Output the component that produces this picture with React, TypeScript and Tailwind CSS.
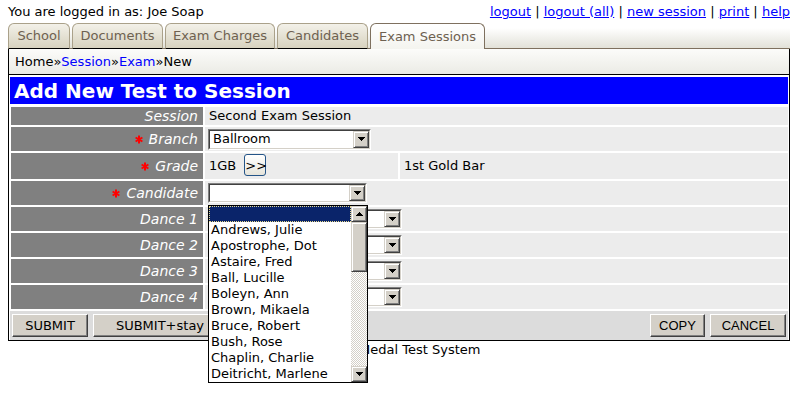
import React from "react";

const candidates = [
  "",
  "Andrews, Julie",
  "Apostrophe, Dot",
  "Astaire, Fred",
  "Ball, Lucille",
  "Boleyn, Ann",
  "Brown, Mikaela",
  "Bruce, Robert",
  "Bush, Rose",
  "Chaplin, Charlie",
  "Deitricht, Marlene",
];

const tabs = [
  { label: "School", width: "w-[62px]" },
  { label: "Documents", width: "w-[91px]" },
  { label: "Exam Charges", width: "w-[110px]" },
  { label: "Candidates", width: "w-[91px]" },
];

const Arrow = ({ up = false }: { up?: boolean }) => (
  <svg width="7" height="4" viewBox="0 0 7 4" shapeRendering="crispEdges">
    <polygon points={up ? "3.5,0 7,4 0,4" : "0,0 7,0 3.5,4"} fill="#000" />
  </svg>
);

const ArrowButton = ({ up = false, className = "" }: { up?: boolean; className?: string }) => (
  <div
    className={`flex items-center justify-center bg-[#d4d0c8] border border-t-[#d4d0c8] border-l-[#d4d0c8] border-r-[#404040] border-b-[#404040] shadow-[inset_1px_1px_0_#ffffff,inset_-1px_-1px_0_#808080] ${className}`}
  >
    <Arrow up={up} />
  </div>
);

const Select = ({
  size,
  value,
  children,
}: {
  size: string;
  value?: string;
  children?: React.ReactNode;
}) => (
  <div className={`relative ${size} border border-t-[#808080] border-l-[#808080] border-r-white border-b-white`}>
    <div className="h-full flex bg-white border border-t-[#404040] border-l-[#404040] border-r-[#d4d0c8] border-b-[#d4d0c8]">
      <div className="flex-1 pl-[3px] flex items-center">{value}</div>
      <ArrowButton className="w-[16px] h-full" />
    </div>
    {children}
  </div>
);

const Star = () => (
  <svg width="8" height="9" viewBox="0 0 8 9" className="mr-[6px]">
    <g stroke="#ff0000" strokeWidth="2">
      <line x1="4" y1="0.5" x2="4" y2="8.5" />
      <line x1="0.6" y1="2.5" x2="7.4" y2="6.5" />
      <line x1="0.6" y1="6.5" x2="7.4" y2="2.5" />
    </g>
  </svg>
);

const Label = ({ text, req = false }: { text: string; req?: boolean }) => (
  <div className="w-[192px] shrink-0 bg-[#808080] text-white italic text-[14px] flex items-center justify-end pr-[5px]">
    {req && <Star />}
    {text}
  </div>
);

const WinButton = ({ label, className = "" }: { label: string; className?: string }) => (
  <button
    className={`h-[23px] bg-[#d4d0c8] border border-t-white border-l-white border-r-[#404040] border-b-[#404040] shadow-[inset_-1px_-1px_0_#808080] text-[13px] text-black ${className}`}
  >
    {label}
  </button>
);

const CandidateList = () => (
  <div className="absolute left-[-1px] top-[21px] z-10 w-[160px] border border-black bg-white flex">
    <div className="flex-1">
      {candidates.map((c, i) => (
        <div
          key={i}
          className={
            i === 0
              ? "h-[16px] bg-[#0a246a] border border-dotted border-[#e6d98c]"
              : "h-[16px] leading-[16px] pl-[2px] whitespace-nowrap"
          }
        >
          {c}
        </div>
      ))}
    </div>
    <div className="w-[16px] flex flex-col">
      <ArrowButton up className="h-[16px]" />
      <div className="h-[50px] bg-[#d4d0c8] border border-t-[#d4d0c8] border-l-[#d4d0c8] border-r-[#404040] border-b-[#404040] shadow-[inset_1px_1px_0_#ffffff,inset_-1px_-1px_0_#808080]" />
      <div className="flex-1 [background-image:repeating-conic-gradient(#d4d0c8_0%_25%,#ffffff_0%_50%)] [background-size:2px_2px]" />
      <ArrowButton className="h-[16px]" />
    </div>
  </div>
);

export default function App() {
  return (
    <div className="w-[796px] h-[407px] bg-white text-black text-[13px] font-['DejaVu_Sans',Verdana,sans-serif]">
      <div className="h-[23px] flex items-center justify-between pl-2 pr-[6px]">
        <span>You are logged in as: Joe Soap</span>
        <span>
          <a className="text-[#0000ff] underline">logout</a> |{" "}
          <a className="text-[#0000ff] underline">logout (all)</a> |{" "}
          <a className="text-[#0000ff] underline">new session</a> |{" "}
          <a className="text-[#0000ff] underline">print</a> |{" "}
          <a className="text-[#0000ff] underline">help</a>
        </span>
      </div>

      <div className="ml-2 mr-[6px] h-[26px] flex items-end gap-[2px] border-b border-[#7e705e] bg-linear-to-b from-white from-20% to-[#e2e1d8]">
        {tabs.map((t) => (
          <div
            key={t.label}
            className={`${t.width} h-[26px] -mb-px flex items-center justify-center rounded-t-[6px] border border-[#aaa18a] border-b-black bg-linear-to-b from-[#f3f1e9] to-[#d7d2bf] text-[#6e6150]`}
          >
            {t.label}
          </div>
        ))}
        <div className="w-[115px] h-[26px] -mb-px relative flex items-center justify-center rounded-t-[6px] border border-b-0 border-[#7e705e] bg-linear-to-b from-white to-[#f4f4ef] text-[#6e6150]">
          Exam Sessions
        </div>
      </div>

      <div className="ml-2 mr-[6px] border-x border-b border-black">
        <div className="h-[26px] flex items-center px-[6px] border-b border-black bg-linear-to-b from-[#fcfcfa] to-[#ebebe5]">
          Home»<span className="text-[#0000ff]">Session</span>»<span className="text-[#0000ff]">Exam</span>»New
        </div>

        <div className="mx-[1px] mt-[2px] h-[27px] bg-[#0000ff] text-white font-bold text-[20px] flex items-center pl-[4px]">
          Add New Test to Session
        </div>

        <div className="flex flex-col gap-[2px] pl-[2px] pr-[1px] pt-[3px]">
          <div className="flex gap-[2px] h-[18px]">
            <Label text="Session" />
            <div className="flex-1 bg-[#ececec] pl-[4px] flex items-center">Second Exam Session</div>
          </div>

          <div className="flex gap-[2px] h-[24px]">
            <Label text="Branch" req />
            <div className="flex-1 bg-[#ececec] pl-[3px] flex items-center">
              <Select size="w-[163px] h-[21px]" value="Ballroom" />
            </div>
          </div>

          <div className="flex gap-[2px] h-[26px]">
            <Label text="Grade" req />
            <div className="w-[193px] bg-[#ececec] pl-[4px] flex items-start">
              <span className="mt-[3px]">1GB</span>
              <button className="ml-[8px] mt-[1px] w-[22px] h-[22px] rounded-[3px] border border-[#245487] bg-linear-to-b from-white to-[#e6e4da] text-[13px] leading-none">
                &gt;&gt;
              </button>
            </div>
            <div className="flex-1 bg-[#ececec] pl-[4px] flex items-center">1st Gold Bar</div>
          </div>

          <div className="flex gap-[2px] h-[24px]">
            <Label text="Candidate" req />
            <div className="flex-1 bg-[#ececec] pl-[3px] flex items-center">
              <Select size="w-[159px] h-[20px]">
                <CandidateList />
              </Select>
            </div>
          </div>

          {["Dance 1", "Dance 2", "Dance 3", "Dance 4"].map((d) => (
            <div key={d} className="flex gap-[2px] h-[24px]">
              <Label text={d} />
              <div className="flex-1 bg-[#ececec] pl-[3px] flex items-center">
                <Select size="w-[194px] h-[20px]" />
              </div>
            </div>
          ))}

          <div className="-ml-px h-[29px] bg-[#dcdcdc] flex items-start pt-[3px] pl-[2px] pr-[2px]">
            <WinButton label="SUBMIT" className="w-[76px]" />
            <WinButton label="SUBMIT+stay" className="ml-[5px] w-[134px]" />
            <div className="flex-1" />
            <WinButton label="COPY" className="w-[55px] font-['Liberation_Sans',Arial,sans-serif]" />
            <WinButton label="CANCEL" className="ml-[5px] w-[76px] font-['Liberation_Sans',Arial,sans-serif]" />
          </div>
        </div>
      </div>

      <div className="text-center leading-[16px] pt-[1px] pr-[2px]">Dance Medal Test System</div>
    </div>
  );
}
